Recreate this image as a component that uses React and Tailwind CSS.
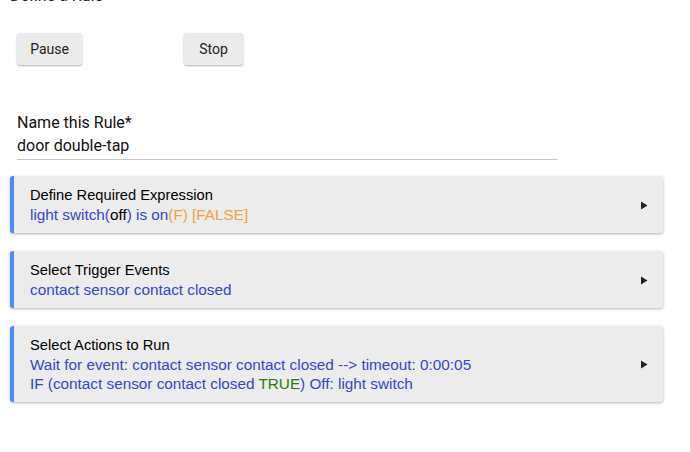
import React from "react";

const roboto = { fontFamily: "Roboto, 'Liberation Sans', sans-serif" };

function Arrow() {
  return (
    <svg width="8" height="9" viewBox="0 0 8 9" className="shrink-0">
      <path d="M1 0.5 L7.5 4.5 L1 8.5 Z" fill="#222" />
    </svg>
  );
}

function Section({ title, children }) {
  return (
    <div className="flex items-center bg-[#ececec] border-l-4 border-[#4b8df5] rounded-[3px] shadow-[0_1px_3px_rgba(0,0,0,0.3)] pl-4 pr-[15px] pt-[10px] pb-[9px]">
      <div className="flex-1 leading-[19px] font-['Liberation_Sans',Arial,sans-serif]">
        <div className="text-black text-[14.7px]">{title}</div>
        <div className="text-[15.3px] text-[#3446c8]">{children}</div>
      </div>
      <Arrow />
    </div>
  );
}

export default function App() {
  return (
    <div className="w-[690px] h-[452px] bg-white overflow-hidden relative">
      <div className="text-[16px] leading-[20px] text-[#222] pl-[10px] -mt-[14px]" style={roboto}>
        Define a Rule
      </div>

      <div className="flex items-start pl-[17px] mt-[27px] gap-[102px]" style={roboto}>
        <button className="h-[32px] w-[65px] bg-[#ebebeb] rounded-[3px] text-[14px] text-[#222] shadow-[0_1px_2px_rgba(0,0,0,0.3)]">
          Pause
        </button>
        <button className="h-[32px] w-[59px] bg-[#ebebeb] rounded-[3px] text-[14px] text-[#222] shadow-[0_1px_2px_rgba(0,0,0,0.3)]">
          Stop
        </button>
      </div>

      <div className="ml-[17px] mt-[47px] w-[541px]" style={roboto}>
        <div className="text-[16px] leading-[22px] text-[#111]">Name this Rule*</div>
        <div className="text-[16px] leading-[22px] text-[#111] mt-[1px] pb-[2px] border-b border-[#c8c8c8]">
          door double-tap
        </div>
      </div>

      <div className="ml-[10px] w-[653px] mt-[16px] flex flex-col gap-[18px]">
        <Section title="Define Required Expression">
          <div>
            light switch(<span className="text-black">off</span>) is on
            <span className="text-[#f2a33a]">(F) [FALSE]</span>
          </div>
        </Section>
        <Section title="Select Trigger Events">
          <div>contact sensor contact closed</div>
        </Section>
        <Section title="Select Actions to Run">
          <div>Wait for event: contact sensor contact closed --&gt; timeout: 0:00:05</div>
          <div>
            IF (contact sensor contact closed <span className="text-[#2b7a0b]">TRUE</span>) Off: light switch
          </div>
        </Section>
      </div>
    </div>
  );
}
